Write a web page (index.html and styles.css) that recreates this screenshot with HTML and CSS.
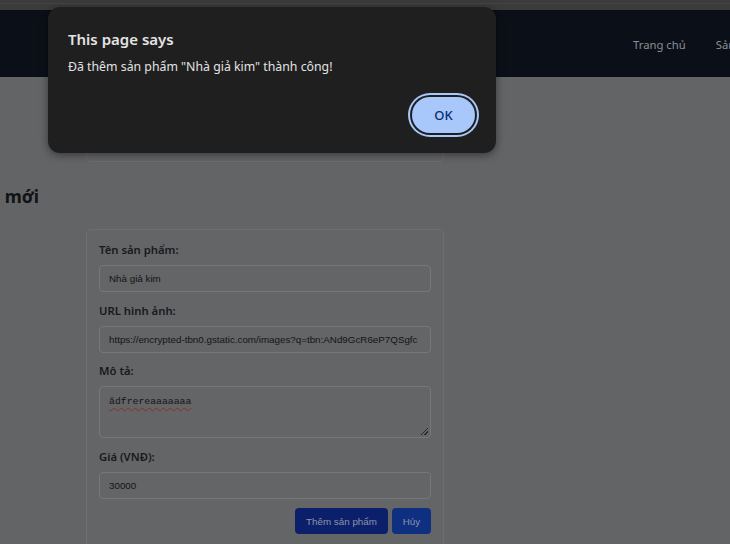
FILE: index.html
```html
<!DOCTYPE html>
<html lang="vi">
<head>
<meta charset="utf-8">
<title>Thêm sản phẩm</title>
<link rel="stylesheet" href="styles.css">
</head>
<body>
<div class="chrome"><div class="chrome-line"></div></div>
<header class="topbar">
  <nav class="nav">
    <a class="nav-link" href="#">Trang chủ</a>
    <a class="nav-link" href="#">Sản phẩm</a>
  </nav>
</header>
<main class="main">
  <div class="card prev-card"></div>
  <div class="title-wrap"><h2 class="title">Thêm sản phẩm mới</h2></div>
  <form class="card form-card">
    <div class="field">
      <label class="label">Tên sản phẩm:</label>
      <input class="input" type="text" value="Nhà giả kim">
    </div>
    <div class="field">
      <label class="label">URL hình ảnh:</label>
      <input class="input" type="text" value="https://encrypted-tbn0.gstatic.com/images?q=tbn:ANd9GcR6eP7QSgfc">
    </div>
    <div class="field">
      <label class="label">Mô tả:</label>
      <div class="textarea"><span class="squiggle">ădfrereaaaaaaa</span><span class="grip"></span></div>
    </div>
    <div class="field">
      <label class="label">Giá (VNĐ):</label>
      <input class="input" type="text" value="30000">
    </div>
    <div class="actions">
      <button class="btn btn-primary" type="button">Thêm sản phẩm</button>
      <button class="btn btn-secondary" type="button">Hủy</button>
    </div>
  </form>
</main>
<div class="dialog">
  <div class="dialog-title">This page says</div>
  <div class="dialog-msg">Đã thêm sản phẩm "Nhà giả kim" thành công!</div>
  <div class="dialog-actions">
    <button class="ok" type="button">OK</button>
  </div>
</div>
</body>
</html>
```

FILE: styles.css
```css
* { box-sizing: border-box; }
html, body { margin: 0; padding: 0; }
body {
  width: 730px;
  height: 544px;
  overflow: hidden;
  background: #636466;
  font-family: "Noto Sans", "Open Sans", sans-serif;
  position: relative;
}
.chrome {
  height: 10px;
  background: #3b3b3b;
  padding-top: 3px;
}
.chrome-line {
  height: 1px;
  background: #454545;
}
.topbar {
  height: 67px;
  background: #0b0f17;
  display: flex;
  align-items: center;
  padding-left: 633px;
  overflow: hidden;
}
.nav {
  display: flex;
  gap: 30px;
  padding-top: 1px;
  flex-shrink: 0;
}
.nav-link {
  color: #8a8e96;
  text-decoration: none;
  font-size: 11.3px;
  white-space: nowrap;
}
.main {
  padding-top: 20px;
}
.card {
  margin-left: 86px;
  width: 358px;
  border: 1px solid #6d6e71;
  border-radius: 5px;
  background: #646567;
}
.prev-card {
  height: 65px;
}
.title-wrap {
  width: 39px;
  overflow: hidden;
  display: flex;
  justify-content: flex-end;
  margin-top: 22px;
}
.title {
  margin: 0;
  white-space: nowrap;
  font-size: 17.5px;
  font-weight: 700;
  line-height: 24px;
  color: #111214;
}
.form-card {
  margin-top: 21px;
  padding: 11px 12px 14px;
  height: 330px;
}
.field {
  display: flex;
  flex-direction: column;
  margin-bottom: 9.5px;
}
.label {
  font-size: 11.3px;
  font-weight: 600;
  line-height: 18px;
  color: #18191b;
  margin-bottom: 6px;
}
.input {
  height: 27px;
  border: 1px solid #77787b;
  border-radius: 4px;
  background: #646567;
  padding: 0 9px;
  font-family: "Liberation Sans", Arial, sans-serif;
  font-size: 9.8px;
  color: #141414;
  outline: none;
  width: 100%;
}
.textarea {
  position: relative;
  height: 52px;
  border: 1px solid #77787b;
  border-radius: 4px;
  background: #646567;
  padding: 8px 9px;
  font-family: "Liberation Mono", "DejaVu Sans Mono", monospace;
  font-size: 9.8px;
  line-height: 14px;
  color: #141414;
}
.squiggle {
  text-decoration: underline wavy #8b2a2a;
  text-decoration-thickness: 1px;
  text-underline-offset: 3px;
}
.grip {
  position: absolute;
  right: 2px;
  bottom: 2px;
  width: 7px;
  height: 7px;
  background: linear-gradient(135deg, transparent 45%, #2a2a2a 45%, #2a2a2a 55%, transparent 55%, transparent 70%, #2a2a2a 70%, #2a2a2a 80%, transparent 80%);
}
.actions {
  display: flex;
  justify-content: flex-end;
  gap: 4px;
  margin-top: 1px;
}
.btn {
  height: 26px;
  border: none;
  border-radius: 4px;
  font-family: "Liberation Sans", Arial, sans-serif;
  font-size: 9.8px;
  color: #8d94aa;
  padding: 0;
}
.btn-primary {
  width: 93px;
  background: #0c1f6a;
}
.btn-secondary {
  width: 39px;
  background: #0f2f80;
}
.dialog {
  position: absolute;
  left: 48px;
  top: 7px;
  width: 448px;
  height: 146px;
  background: #1f1f1f;
  border-radius: 12px;
  box-shadow: 0 2px 8px rgba(0,0,0,0.45);
  padding: 21px 17px 16px 20px;
  display: flex;
  flex-direction: column;
  font-family: "Noto Sans", "Open Sans", sans-serif;
  color: #e3e3e3;
}
.dialog-title {
  font-size: 15px;
  font-weight: 600;
  line-height: 22px;
}
.dialog-msg {
  margin-top: 7px;
  font-size: 12.3px;
  line-height: 20px;
}
.dialog-actions {
  margin-top: auto;
  display: flex;
  justify-content: flex-end;
}
.ok {
  width: 63px;
  height: 36px;
  margin: 4px;
  border-radius: 18px;
  border: none;
  background: #a8c7fa;
  box-shadow: 0 0 0 2px #1f1f1f, 0 0 0 4px #a8c7fa;
  color: #062e6f;
  font-family: "Noto Sans", "Open Sans", sans-serif;
  font-size: 13px;
  font-weight: 500;
  padding: 0;
}
```
